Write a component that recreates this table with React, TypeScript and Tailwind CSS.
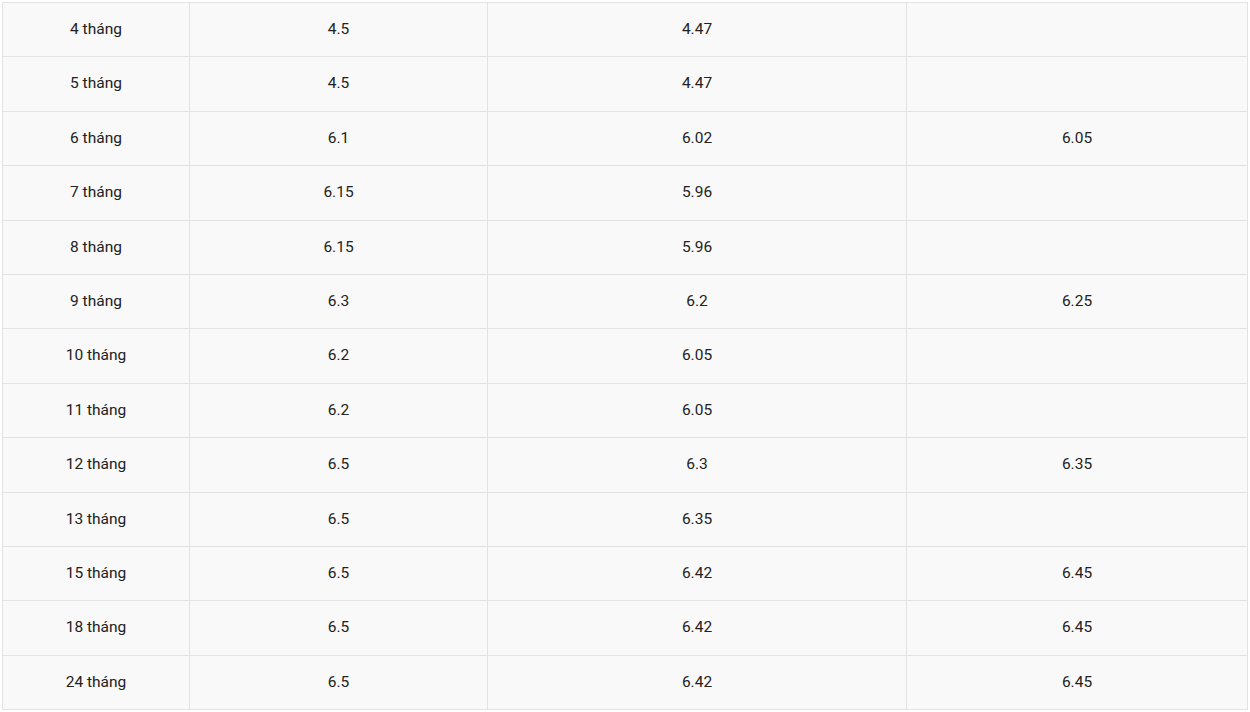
const rows: [string, string, string, string][] = [
  ["4 tháng", "4.5", "4.47", ""],
  ["5 tháng", "4.5", "4.47", ""],
  ["6 tháng", "6.1", "6.02", "6.05"],
  ["7 tháng", "6.15", "5.96", ""],
  ["8 tháng", "6.15", "5.96", ""],
  ["9 tháng", "6.3", "6.2", "6.25"],
  ["10 tháng", "6.2", "6.05", ""],
  ["11 tháng", "6.2", "6.05", ""],
  ["12 tháng", "6.5", "6.3", "6.35"],
  ["13 tháng", "6.5", "6.35", ""],
  ["15 tháng", "6.5", "6.42", "6.45"],
  ["18 tháng", "6.5", "6.42", "6.45"],
  ["24 tháng", "6.5", "6.42", "6.45"],
];

const App = () => {
  return (
    <div className="w-[1250px] h-[712px] overflow-hidden bg-white pl-[2px] pt-[2px] font-['Roboto',sans-serif]">
      <table className="w-[1245px] table-fixed border-collapse text-[15.5px] text-[#222]">
        <colgroup>
          <col className="w-[187px]" />
          <col className="w-[298px]" />
          <col className="w-[419px]" />
          <col className="w-[341px]" />
        </colgroup>
        <tbody>
          {rows.map((row, i) => (
            <tr key={i} className="bg-[#f9f9f9]">
              {row.map((cell, j) => (
                <td
                  key={j}
                  className="h-[54.4px] border border-[#e3e3e3] p-0 text-center align-middle"
                >
                  {cell}
                </td>
              ))}
            </tr>
          ))}
        </tbody>
      </table>
    </div>
  );
};

export default App;
